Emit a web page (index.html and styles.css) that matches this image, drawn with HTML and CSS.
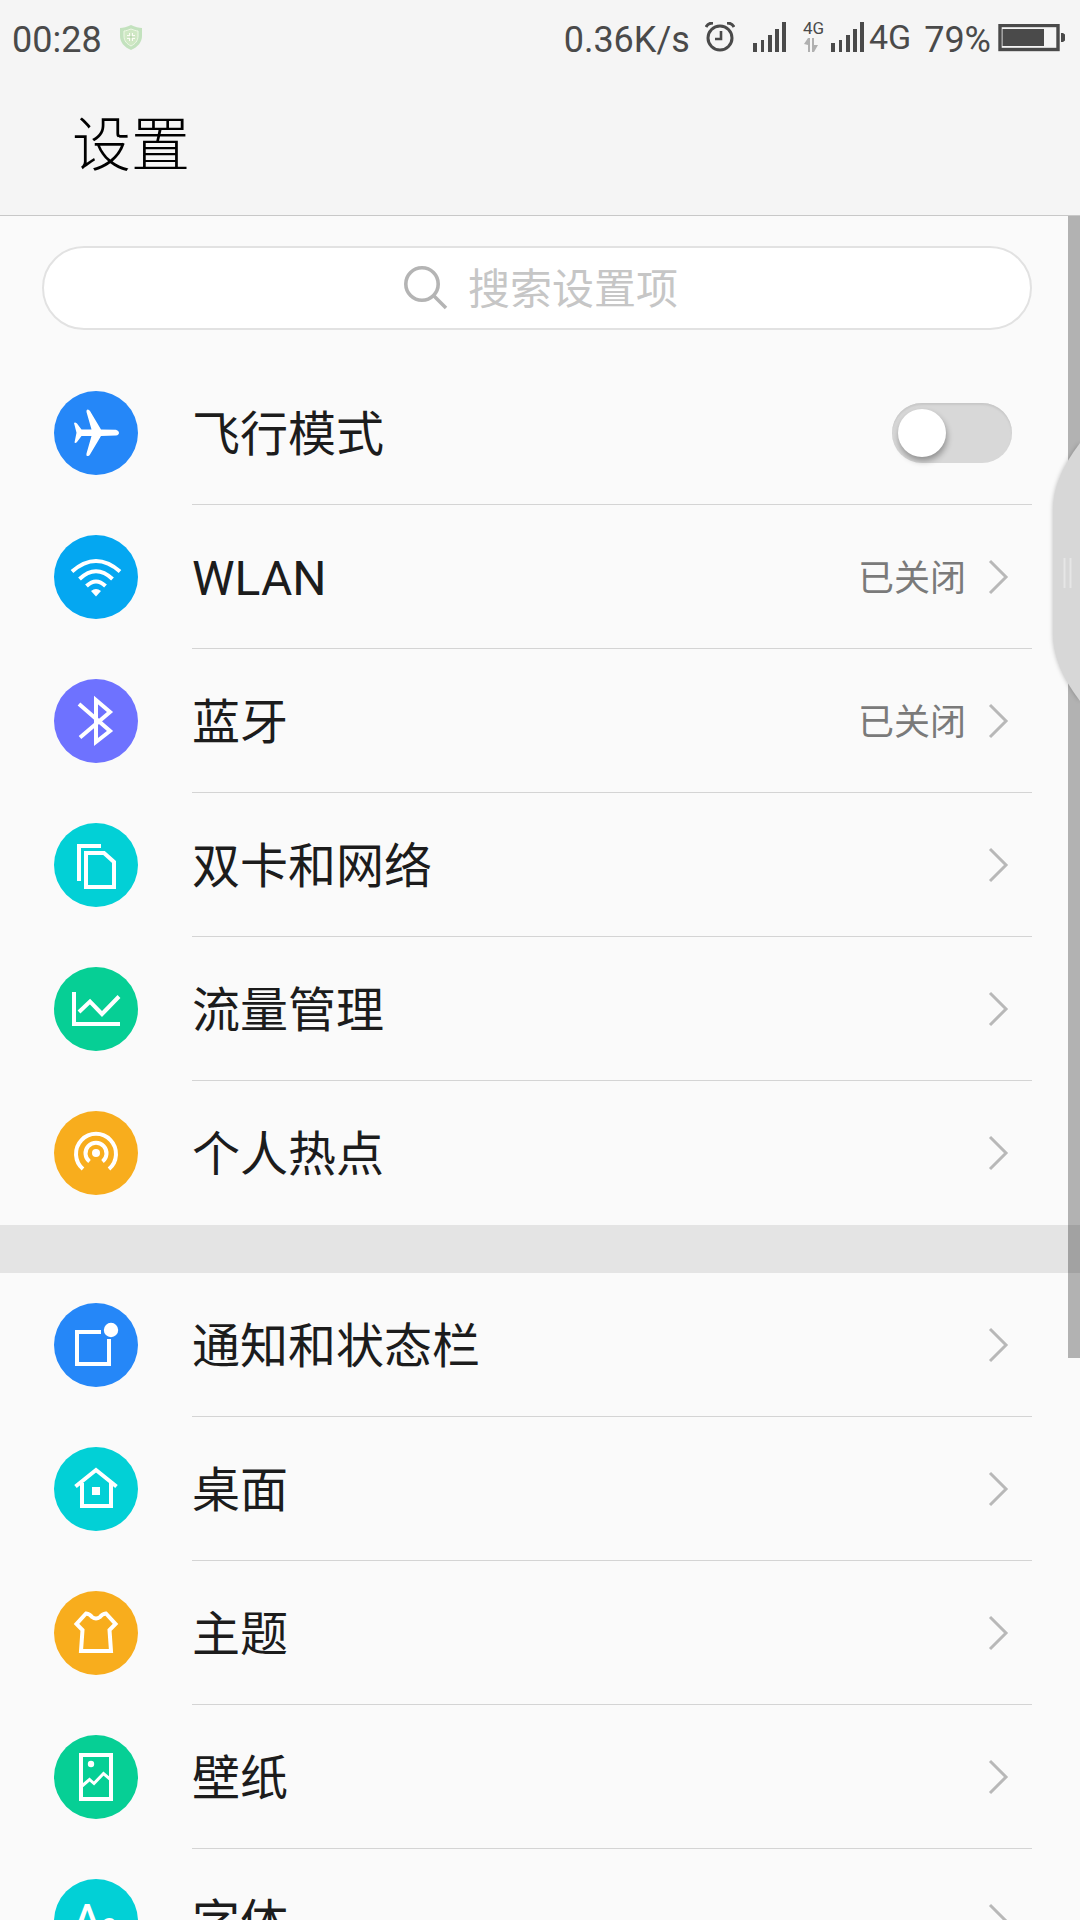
FILE: index.html
```html
<!DOCTYPE html>
<html lang="zh-CN">
<head>
<meta charset="utf-8">
<meta name="viewport" content="width=device-width, initial-scale=1">
<title>设置</title>
<link rel="stylesheet" href="styles.css">
</head>
<body>
<header class="header">
  <div class="status">
    <span>00:28</span>
    <svg class="shield" width="24" height="28" viewBox="0 0 24 28" aria-hidden="true">
      <path d="M12 1 C8 3 4 4 1 4 V12 C1 18 5 23 12 26 C19 23 23 18 23 12 V4 C20 4 16 3 12 1Z" fill="#c3e2be"/>
      <path d="M12 5 C9 6 7 7 5 7 V12 C5 17 8 20 12 22 C16 20 19 17 19 12 V7 C17 7 15 6 12 5Z" fill="#cfe8c4" stroke="#eef7e6" stroke-width="1"/>
      <path d="M12 9 V17 M8 13 H16" stroke="#fbfdf4" stroke-width="4"/>
      <path d="M12 9 V17 M8 13 H16" stroke="#a9cf9d" stroke-width="1"/>
    </svg>
    <span class="speed">0.36K/s</span>
    <svg class="alarm" width="30" height="30" viewBox="0 0 30 30" fill="none" stroke="#4a4a4a" aria-hidden="true">
      <circle cx="15" cy="16" r="12" stroke-width="3"/>
      <path d="M16 9 V17 H10" stroke-width="2.600"/>
      <path d="M1 5 Q3 1 8 1 M22 1 Q27 1 29 5" stroke-width="3"/>
    </svg>
    <svg class="signal" width="34" height="30" viewBox="0 0 34 30" fill="#4a4a4a" aria-hidden="true">
      <path d="M0 21h4v9H0zM8 18h3v12H8zM15 13h4v17h-4zM22 7h4v23h-4zM29 0h4v30h-4z"/>
    </svg>
    <svg class="data" width="20" height="32" viewBox="0 0 20 32" aria-hidden="true">
      <text class="data-text" x="-1" y="14">4G</text>
      <path d="M0 24 L4 18 H6 V32 H4 V25Z M8 18 H10 V25 H14 L10 32 H8Z" fill="#b0b0b0"/>
    </svg>
    <svg class="signal-data" width="34" height="30" viewBox="0 0 34 30" fill="#4a4a4a" aria-hidden="true">
      <path d="M0 21h4v9H0zM8 18h3v12H8zM15 13h4v17h-4zM22 7h4v23h-4zM29 0h4v30h-4z"/>
    </svg>
    <span class="network">4G</span>
    <span class="percent">79%</span>
    <svg class="battery" width="68" height="28" viewBox="0 0 68 28" aria-hidden="true">
      <rect x="2" y="1.500" width="58" height="24" fill="none" stroke="#4a4a4a" stroke-width="3.400"/>
      <path d="M4.500 5H46v17H4.500zM63 9h2l2 1.500v6L65 18h-2z" fill="#4a4a4a"/>
    </svg>
  </div>
  <h1 class="title">设置</h1>
</header>

<div class="body">
<main class="scroll">
  <label class="search">
    <svg width="44" height="44" viewBox="0 0 44 44" fill="none" stroke="#b4b4b4" stroke-width="3.600" aria-hidden="true">
      <circle cx="18" cy="18" r="16.200"/><path d="M29.500 29.500 L42 42"/>
    </svg>
    <input class="search-input" type="text" placeholder="搜索设置项" aria-label="搜索设置项">
  </label>

  <ul class="group">
    <li><label class="row">
      <svg class="icon blue" viewBox="0 0 84 84" aria-hidden="true"><path fill="#fff" d="M62 38.700 Q65 39.500 65 41.700 Q65 44 62 44.500 L47 45 L36 63.500 Q35 65.500 33 65 Q32 64.500 32.500 62.500 L37.500 45 H27.500 L23 51 Q21.500 52.500 20.500 51.500 L22.500 41.700 L20 32 Q21 31 23 32.500 L27.500 38.500 H37.500 L32.500 21 Q32 19 33.500 18.500 Q35 18.300 36 20 L47 38.500Z"/></svg>
      <span class="cell"><span class="name">飞行模式</span><input class="switch" type="checkbox" role="switch"></span>
    </label></li>
    <li><a class="row" href="#wlan">
      <svg class="icon sky" viewBox="0 0 84 84" aria-hidden="true"><g fill="none" stroke="#fff" stroke-width="4"><path d="M18 36.500 Q42 15.500 66 36.500"/><path d="M25.500 44 Q42 28.500 58.500 44"/><path d="M32.500 51 Q42 42 51.500 51"/></g><path fill="#fff" d="M37 56 Q42 52 47 56 L42 61.500Z"/></svg>
      <span class="cell"><span class="name">WLAN</span><span class="state">已关闭</span><svg class="chevron" viewBox="0 0 30 36" aria-hidden="true"><path d="M8 2 L24 18 L8 34"/></svg></span>
    </a></li>
    <li><a class="row" href="#bluetooth">
      <svg class="icon violet" viewBox="0 0 84 84" aria-hidden="true"><path class="line" d="M25 25 L56 52 L42 63 V21 L56 33 L26 58.500"/></svg>
      <span class="cell"><span class="name">蓝牙</span><span class="state">已关闭</span><svg class="chevron" viewBox="0 0 30 36" aria-hidden="true"><path d="M8 2 L24 18 L8 34"/></svg></span>
    </a></li>
    <li><a class="row" href="#sim">
      <svg class="icon cyan" viewBox="0 0 84 84" aria-hidden="true"><path class="line" d="M25 58 V23 H47 M32 30 H50 L60 39 V64 H32Z"/></svg>
      <span class="cell"><span class="name">双卡和网络</span><svg class="chevron" viewBox="0 0 30 36" aria-hidden="true"><path d="M8 2 L24 18 L8 34"/></svg></span>
    </a></li>
    <li><a class="row" href="#traffic">
      <svg class="icon green" viewBox="0 0 84 84" aria-hidden="true"><path class="line" d="M20 25 V57 H66 M25 45 L36 34.500 L48 47 L65 29.500"/></svg>
      <span class="cell"><span class="name">流量管理</span><svg class="chevron" viewBox="0 0 30 36" aria-hidden="true"><path d="M8 2 L24 18 L8 34"/></svg></span>
    </a></li>
    <li><a class="row" href="#hotspot">
      <svg class="icon amber" viewBox="0 0 84 84" aria-hidden="true"><path class="line" d="M29 58 A20 20 0 1 1 55 58 M35.500 50.500 A10.500 10.500 0 1 1 48.500 50.500"/><circle cx="42" cy="42" r="4" fill="#fff"/></svg>
      <span class="cell"><span class="name">个人热点</span><svg class="chevron" viewBox="0 0 30 36" aria-hidden="true"><path d="M8 2 L24 18 L8 34"/></svg></span>
    </a></li>
  </ul>

  <ul class="group">
    <li><a class="row" href="#notifications">
      <svg class="icon blue" viewBox="0 0 84 84" aria-hidden="true"><path class="line" d="M47 29 H23 V61 H55 V36"/><circle cx="57" cy="27" r="7.200" fill="#fff"/></svg>
      <span class="cell"><span class="name">通知和状态栏</span><svg class="chevron" viewBox="0 0 30 36" aria-hidden="true"><path d="M8 2 L24 18 L8 34"/></svg></span>
    </a></li>
    <li><a class="row" href="#desktop">
      <svg class="icon cyan" viewBox="0 0 84 84" aria-hidden="true"><path class="line" d="M21.500 39.500 L42 23 L62.500 39.500 M28 36 V59 H57 V36"/><path fill="#fff" d="M38 40h8v8h-8z"/></svg>
      <span class="cell"><span class="name">桌面</span><svg class="chevron" viewBox="0 0 30 36" aria-hidden="true"><path d="M8 2 L24 18 L8 34"/></svg></span>
    </a></li>
    <li><a class="row" href="#theme">
      <svg class="icon amber" viewBox="0 0 84 84" aria-hidden="true"><path class="line" d="M32 22.500 Q36 23 38 26 Q42 29 46 26 Q48 23 52 22.500 L61.500 33 L55.500 39 L57 60 H27 L28.500 39 L22.500 33Z"/></svg>
      <span class="cell"><span class="name">主题</span><svg class="chevron" viewBox="0 0 30 36" aria-hidden="true"><path d="M8 2 L24 18 L8 34"/></svg></span>
    </a></li>
    <li><a class="row" href="#wallpaper">
      <svg class="icon green" viewBox="0 0 84 84" aria-hidden="true"><path class="line" d="M27 20 H57 V64 H27Z"/><path fill="none" stroke="#fff" stroke-width="3" d="M28 51 L35.500 44.500 L40 48.500 L49.500 38.500 L57 45"/><circle cx="37" cy="29" r="3.200" fill="#fff"/></svg>
      <span class="cell"><span class="name">壁纸</span><svg class="chevron" viewBox="0 0 30 36" aria-hidden="true"><path d="M8 2 L24 18 L8 34"/></svg></span>
    </a></li>
    <li><a class="row" href="#font">
      <svg class="icon cyan" viewBox="0 0 84 84" aria-hidden="true"><text class="glyph-large" x="33" y="54">A</text><text class="glyph-small" x="55" y="54">a</text></svg>
      <span class="cell"><span class="name">字体</span><svg class="chevron" viewBox="0 0 30 36" aria-hidden="true"><path d="M8 2 L24 18 L8 34"/></svg></span>
    </a></li>
  </ul>
</main>
<div class="scrollbar"></div>
<svg class="handle" width="36" height="276" viewBox="0 0 36 276" aria-hidden="true">
  <path d="M36 9 Q9 44 9 76 V200 Q9 232 36 267Z" fill="#d7d7d7"/>
  <path d="M20.500 124 V154 M26.500 124 V154" stroke="#e6e6e6" stroke-width="2"/>
</svg>
</div>
</body>
</html>
```
FILE: styles.css
```css
* {
  box-sizing: border-box;
}

body {
  margin: 0;
  height: 100vh;
  display: flex;
  flex-direction: column;
  background: #fafafa;
  color: #1c1c1c;
  font-family: Roboto, "Noto Sans CJK SC", sans-serif;
  overflow: hidden;
}

.header {
  background: #f5f5f5;
  border-bottom: 1px solid #c8c8c8;
}

.status {
  display: flex;
  align-items: baseline;
  height: 80px;
  padding: 18px 14px 0 12px;
  font-size: 36px;
  line-height: 44px;
  color: #4a4a4a;
}

.shield {
  margin-left: 17px;
}

.speed {
  margin-left: auto;
}

.alarm {
  margin-left: 15px;
}

.signal {
  margin-left: 18px;
}

.data {
  margin-left: 17px;
  overflow: visible;
}

.data-text {
  font-size: 17px;
  fill: #4a4a4a;
}

.signal-data {
  margin-left: 7px;
}

.network {
  align-self: flex-start;
  margin-left: 4px;
  font-size: 34px;
  line-height: 38px;
}

.percent {
  margin-left: 13px;
}

.battery {
  margin-left: 7px;
}

.title {
  margin: 0;
  padding: 22px 72px 25px;
  font-size: 59px;
  line-height: 88px;
  font-weight: 300;
  color: #000;
}

.body {
  position: relative;
  flex: 1;
  min-height: 0;
}

.scroll {
  height: 100%;
  overflow-y: auto;
  scrollbar-width: none;
}

.search {
  display: flex;
  align-items: center;
  justify-content: center;
  gap: 20px;
  height: 84px;
  margin: 30px 48px 31px 42px;
  padding-left: 8px;
  border: 2px solid #e2e2e2;
  border-radius: 42px;
  background: #fff;
}

.search-input {
  width: 5em;
  padding: 4px 0 0;
  border: 0;
  outline: 0;
  background: none;
  font: inherit;
  font-size: 42px;
  line-height: 60px;
}

.search-input::placeholder {
  color: #c6c6c6;
  opacity: 1;
}

.group {
  margin: 0;
  padding: 0;
  list-style: none;
}

.group + .group {
  border-top: 48px solid #e4e4e4;
}

.row {
  display: flex;
  align-items: center;
  gap: 54px;
  height: 144px;
  padding: 0 48px 0 54px;
  color: inherit;
  text-decoration: none;
}

.icon {
  flex: none;
  width: 84px;
  height: 84px;
  border-radius: 50%;
}

.blue { background: #2587f8; }
.sky { background: #04a7f1; }
.violet { background: #6e72ff; }
.cyan { background: #02d0d6; }
.green { background: #06cf95; }
.amber { background: #f8ad1d; }

.line {
  fill: none;
  stroke: #fff;
  stroke-width: 4;
}

.glyph-large,
.glyph-small {
  font-size: 41px;
  font-weight: 500;
  fill: #fff;
  text-anchor: middle;
}

.glyph-small {
  font-size: 28px;
}

.cell {
  display: flex;
  flex: 1;
  align-items: center;
  gap: 16px;
  height: 100%;
  padding-right: 20px;
  border-bottom: 1px solid #d4d4d4;
}

.group > :last-child .cell {
  border-bottom-color: transparent;
}

.name {
  flex: 1;
  padding-top: 4px;
  font-size: 48px;
  line-height: 72px;
}

.state {
  padding-top: 4px;
  font-size: 36px;
  line-height: 54px;
  color: #7a7a7a;
}

.chevron {
  width: 30px;
  height: 36px;
  fill: none;
  stroke: #b8b8b8;
  stroke-width: 3;
}

.switch {
  appearance: none;
  width: 120px;
  height: 60px;
  margin: 0;
  padding: 6px;
  border-radius: 30px;
  background: #d8d8d8;
  box-shadow: inset 0 2px 2px #c8c8c8;
}

.switch::before {
  content: "";
  display: block;
  width: 48px;
  height: 48px;
  border-radius: 50%;
  background: #fff;
  box-shadow: 1px 4px 6px #00000055;
}

.switch:checked::before {
  margin-left: auto;
}

.scrollbar {
  position: absolute;
  top: 0;
  right: 0;
  width: 12px;
  height: 67%;
  background: #00000049;
}

.handle {
  position: absolute;
  top: 218px;
  right: 0;
  filter: drop-shadow(0 0 2px #00000040);
}
```
